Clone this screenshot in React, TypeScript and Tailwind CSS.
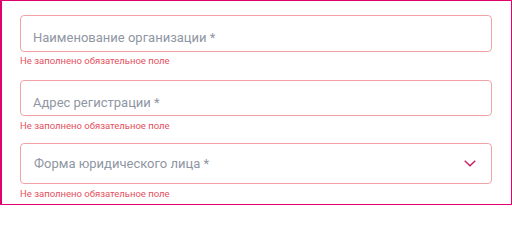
import React from "react";

const font = { fontFamily: "Roboto, 'Noto Sans', sans-serif" };

function Error() {
  return (
    <div className="text-[9.5px] leading-[14px] text-[#e5505e]" style={font}>
      Не заполнено обязательное поле
    </div>
  );
}

export default function App() {
  return (
    <div className="w-[512px] h-[205px] bg-white border-t border-r border-b border-l-2 border-[#e0006f] pl-[18px] pr-[19px] pt-[14px]" style={font}>
      <div className="flex flex-col">
        <div className="h-[37px] rounded-[4px] border border-[#f2a3a6] flex items-end pl-[12px] pb-[5px]">
          <span className="text-[13px] leading-[16px] text-[#8f96a3]">Наименование организации *</span>
        </div>
        <div className="mt-[2px]"><Error /></div>
        <div className="mt-[12px] h-[36px] rounded-[4px] border border-[#f2a3a6] flex items-end pl-[12px] pb-[4px]">
          <span className="text-[13px] leading-[16px] text-[#8f96a3]">Адрес регистрации *</span>
        </div>
        <div className="mt-[3px]"><Error /></div>
        <div className="mt-[10px] h-[41px] rounded-[4px] border border-[#f2a3a6] flex items-center justify-between pl-[13px] pr-[15px]">
          <span className="text-[13px] leading-[16px] text-[#8f96a3]">Форма юридического лица *</span>
          <svg width="12" height="7" viewBox="0 0 12 7" fill="none">
            <path d="M0.7 0.7 L6 5.8 L11.3 0.7" stroke="#c8185a" strokeWidth="1.3" />
          </svg>
        </div>
        <div className="mt-[3px]"><Error /></div>
      </div>
    </div>
  );
}
